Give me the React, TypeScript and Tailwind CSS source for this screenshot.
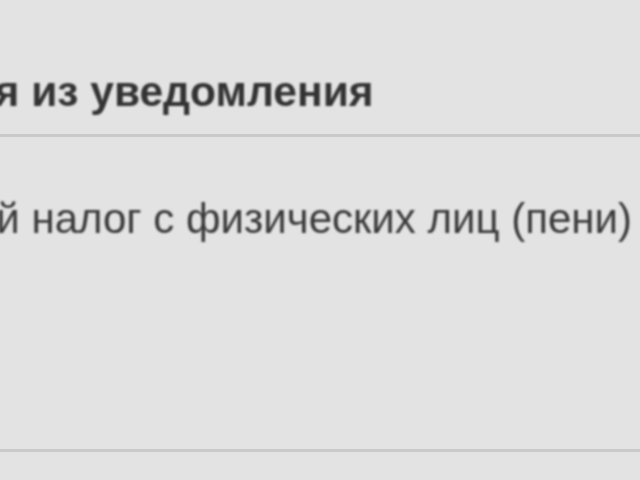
export default function App() {
  return (
    <div className="w-[640px] h-[480px] overflow-hidden bg-[#e3e3e3] font-['Liberation_Sans',Arial,sans-serif]">
      {/* заголовок блока */}
      <div className="h-[137px] pt-[71px] border-b-[3px] border-[#cacaca]">
        <p className="ml-[-235px] whitespace-nowrap text-[42.5px] leading-none font-bold text-[#333333] blur-[0.8px]">
          Начисления из уведомления
        </p>
      </div>
      {/* строка начисления */}
      <div className="h-[315px] pt-[61px] border-b-[3px] border-[#cacaca]">
        <p className="ml-[-203px] whitespace-nowrap text-[42px] leading-none text-[#3a3a3a] blur-[0.8px]">
          Земельный налог с физических лиц (пени)
        </p>
      </div>
    </div>
  );
}
